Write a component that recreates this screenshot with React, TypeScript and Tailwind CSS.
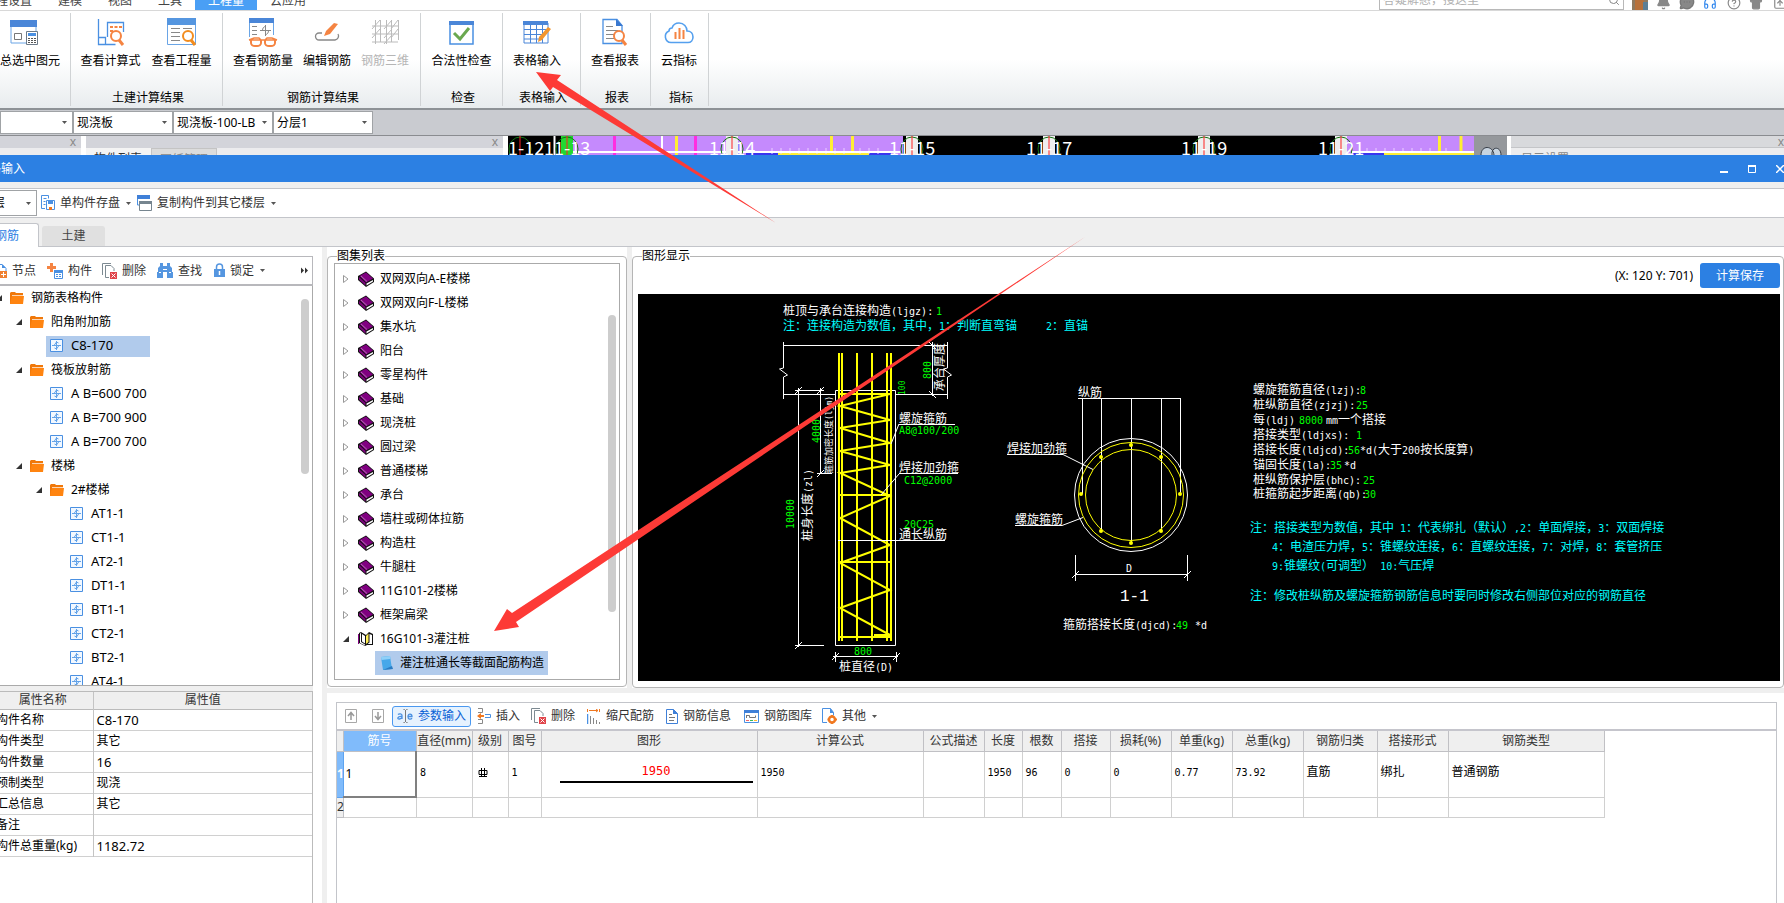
import { useState } from 'react'
import type { ReactNode } from 'react'
import { Bell, CircleHelp, Headphones, MessageCircleMore, Search, Shirt, SquareArrowUp } from 'lucide-react'

const BLUE = '#4a90e2'
const ORANGE = '#f58442'

function Caret() {
  return (
    <svg width="7" height="5" viewBox="0 0 7 5" className="shrink-0">
      <path d="M1 1h5L3.500 4z" fill="#555" />
    </svg>
  )
}

/* ---------- ribbon icons ---------- */

const ribbonIcons: Record<string, ReactNode> = {
  summary: (
    <svg width="41" height="28" viewBox="0 0 41 28" fill="none">
      <path d="M1 8v17h25V8" stroke="#6aa5e6" />
      <path d="M0 2h27v7H0z" fill="#4a86d8" />
      <path d="M4.500 15.500h7v6h-7z" stroke="#777" />
      <path d="M16.500 13.500h11v13h-11z" fill="#fff" stroke="#6c7a89" />
      <path d="M18 15h8v3h-8z" fill={BLUE} />
      <path d="M18 20h2v1h-2zM21 20h2v1h-2zM24 20h2v1h-2zM18 22h2v1h-2zM21 22h2v1h-2zM24 22h2v1h-2zM18 24h2v1h-2zM21 24h2v1h-2zM24 24h2v1h-2z" fill="#555" />
    </svg>
  ),
  formula: (
    <svg width="28" height="28" viewBox="0 0 28 28" fill="none">
      <path d="M1.500 1v25.500h17M1.500 19.500h7v7M10.500 19V4.500h16V14" stroke={BLUE} strokeWidth="1.300" />
      <path d="M13 8h3v2h-3zM17.500 8h3v2h-3zM22 8h3v2h-3zM13 12h3v2h-3z" fill={ORANGE} />
      <circle cx="19" cy="18" r="5" fill="#fff" stroke={ORANGE} strokeWidth="2" />
      <path d="M22 22l4 5" stroke={ORANGE} strokeWidth="3" />
    </svg>
  ),
  quantity: (
    <svg width="30" height="28" viewBox="0 0 30 28" fill="none">
      <path d="M0.500 6v20.500h28V6" stroke="#6aa5e6" />
      <path d="M0 0h29v7H0z" fill="#5596e0" />
      <path d="M4 10.500h9M4 14.500h9M4 18.500h9M4 22.500h9M16 10.500h9" stroke="#888" />
      <circle cx="21" cy="18" r="5" fill="#fff" stroke="#f28c1e" strokeWidth="2" />
      <path d="M24 22l4 5" stroke="#f28c1e" strokeWidth="3" />
    </svg>
  ),
  glasses: (
    <svg width="30" height="30" viewBox="0 0 30 30" fill="none">
      <path d="M1.500 5v14M25.500 5v12" stroke="#6aa5e6" />
      <path d="M1 0h25v5H1z" fill="#4a86d8" />
      <path d="M4 8.500h5M4 12.500h5M4 16.500h5" stroke="#888" />
      <path d="M17.500 7v11M12 12.500h11M14.500 12.500c0-2 1-4 3-4M20.500 12.500c0 2-1 4-3 4" stroke="#888" />
      <path d="M1 22l5-2h5l2 2M29 22l-5-2h-5l-2 2M1 22h28" stroke={ORANGE} strokeWidth="1.500" />
      <path d="M3 22v3a4 3 0 004 3h2a4 3 0 004-3v-3M17 22v3a4 3 0 004 3h2a4 3 0 004-3v-3" stroke={ORANGE} strokeWidth="2" />
    </svg>
  ),
  edit: (
    <svg width="26" height="28" viewBox="0 0 26 28" fill="none">
      <path d="M8 15H5a3.500 3.500 0 000 7h16a4 4 0 003-6" stroke="#888" strokeWidth="1.300" />
      <path d="M20 5l4 1-8 10-6 2 2-5z" fill={ORANGE} />
    </svg>
  ),
  grid3d: (
    <svg width="28" height="28" viewBox="0 0 28 28" fill="none" stroke="#bbb">
      <path d="M4.500 2v24M15.500 2v24M9.500 2v22M20.500 2v22M27.500 2v20M1 8h26M1 16h26M1 24h26M1 11l8-9M1 20l8-9M13 11l8-9M13 20l8-9M13 26l8-9M20 11l7-9M20 20l7-9" />
    </svg>
  ),
  check: (
    <svg width="26" height="28" viewBox="0 0 26 28" fill="none">
      <path d="M1 4h23v22H1z" stroke={BLUE} strokeWidth="1.500" />
      <path d="M0 3h25v4H0z" fill="#4a86d8" />
      <path d="M5 15l6 6 9-11" stroke="#6aa84f" strokeWidth="3" />
    </svg>
  ),
  table: (
    <svg width="28" height="28" viewBox="0 0 28 28" fill="none">
      <path d="M1 5h24v20H1zM1 11.500h24M1 16.500h20M1 21h18M7.500 6v19M13.500 6v19M19.500 6v19" stroke="#4a86d8" />
      <path d="M0 3h25v4H0z" fill="#4a86d8" />
      <path d="M25 9l3 2-9 11-4 2 1-5z" fill="#f2952e" />
    </svg>
  ),
  report: (
    <svg width="26" height="28" viewBox="0 0 26 28" fill="none">
      <path d="M1 1.500h14l5 6v18H1z" stroke={BLUE} strokeWidth="1.300" />
      <path d="M14 1l7 7h-7z" fill="#3a78cf" />
      <path d="M4 8.500h7M4 12.500h12M4 16.500h8M4 20.500h8" stroke="#888" />
      <circle cx="17" cy="18" r="5" fill="#fff" stroke={ORANGE} strokeWidth="2" />
      <path d="M20 22l4 5" stroke={ORANGE} strokeWidth="3" />
    </svg>
  ),
  cloud: (
    <svg width="32" height="28" viewBox="0 0 32 28" fill="none">
      <path d="M8 24.500a6 6 0 01-2-11.500c0-2 1-3 3-3 1-3 4-5 7-5 5 0 8 4 8 8 4 0 6 3 6 6 0 3-2 5.500-5 5.500z" stroke="#55a0ee" strokeWidth="1.600" />
      <path d="M12.500 14v7M16.500 10v11M20.500 12v9" stroke={ORANGE} strokeWidth="2" />
    </svg>
  ),
}

const ribbonGroups = [
  { title: '', cls: 'w-[71px]', gap: 'pl-0', tools: [{ icon: 'summary', label: '总选中图元', cls: 'w-[60px]' }] },
  {
    title: '土建计算结果', cls: 'w-[152px]', gap: 'pl-[9px] gap-[10px]',
    tools: [{ icon: 'formula', label: '查看计算式', cls: 'w-[61px]' }, { icon: 'quantity', label: '查看工程量', cls: 'w-[61px]' }],
  },
  {
    title: '钢筋计算结果', cls: 'w-[198px]', gap: 'pl-[10px] gap-[10px]',
    tools: [
      { icon: 'glasses', label: '查看钢筋量', cls: 'w-[60px]' },
      { icon: 'edit', label: '编辑钢筋', cls: 'w-[48px]' },
      { icon: 'grid3d', label: '钢筋三维', cls: 'w-[48px]', disabled: true },
    ],
  },
  { title: '检查', cls: 'w-[82px]', gap: 'pl-[10px]', tools: [{ icon: 'check', label: '合法性检查', cls: 'w-[61px]' }] },
  { title: '表格输入', cls: 'w-[78px]', gap: 'pl-[10px]', tools: [{ icon: 'table', label: '表格输入', cls: 'w-[48px]' }] },
  { title: '报表', cls: 'w-[70px]', gap: 'pl-[10px]', tools: [{ icon: 'report', label: '查看报表', cls: 'w-[48px]' }] },
  { title: '指标', cls: 'w-[58px]', gap: 'pl-[10px]', tools: [{ icon: 'cloud', label: '云指标', cls: 'w-[36px]' }] },
]

function MenuBar() {
  return (
    <header className="flex h-[11px] shrink-0 items-end overflow-hidden border-b border-[#d8d8d8] bg-white">
      <nav className="flex h-[18px] shrink-0 leading-[18px] text-[#444]">
        <a href="#set" className="-ml-[4px] w-[62px]">程设置</a>
        <a href="#model" className="w-[50px]">建模</a>
        <a href="#view" className="w-[50px]">视图</a>
        <a href="#tools" className="w-[37px]">工具</a>
        <a href="#qty" className="w-[62px] bg-[#4a9ff5] text-center text-white">工程量</a>
        <a href="#cloud" className="ml-[13px]">云应用</a>
      </nav>
      <div className="ml-auto flex shrink-0 items-end text-[#888]">
        <label className="mr-[8px] flex h-[20px] w-[245px] items-center border border-[#b8b8b8] px-[3px]">
          <input aria-label="搜索" placeholder="答疑解惑，搜这里" className="min-w-0 flex-1 leading-[18px] outline-none placeholder:text-[#b0b0b0]" />
          <Search size={12} />
        </label>
        <svg width="16" height="16" viewBox="0 0 16 16" className="mr-2">
          <path d="M0 0h16v16H0z" fill="#8f7a60" />
          <path d="M3 6l4-4 5 5v9H3z" fill="#b8713a" />
          <path d="M11 8h5v8h-5z" fill="#5c7f96" />
        </svg>
        <Bell size={15} fill="#888" className="mr-2" />
        <MessageCircleMore size={16} fill="#888" stroke="#777" className="mr-2" />
        <Headphones size={14} className="mr-[10px] text-[#2f86ee]" />
        <CircleHelp size={14} className="mr-2" />
        <Shirt size={14} fill="#888" className="mr-[10px]" />
        <SquareArrowUp size={14} className="-mr-[3px]" />
      </div>
    </header>
  )
}

function Ribbon() {
  return (
    <section className="flex h-[99px] shrink-0 border-b-2 border-[#8d9296] bg-linear-to-b from-white from-50% to-[#e8ecee]">
      {ribbonGroups.map((g, i) => (
        <div key={i} className={`${g.cls} my-[2px] flex shrink-0 flex-col border-r border-[#d0d3d5]`}>
          <div className={`flex ${g.gap}`}>
            {g.tools.map(t => (
              <button key={t.label} type="button" disabled={'disabled' in t}
                className={`${t.cls} flex flex-col items-center whitespace-nowrap pt-[5px] text-black disabled:text-[#b5b5b5]`}>
                <span className="flex h-[30px] items-start">{ribbonIcons[t.icon]}</span>
                <span className="mt-[4px] leading-[18px]">{t.label}</span>
              </button>
            ))}
          </div>
          <div className="mt-[19px] pl-[3px] text-center leading-[18px] text-black">{g.title}</div>
        </div>
      ))}
    </section>
  )
}

function Picker({ label, value, cls }: { label: string; value: string; cls: string }) {
  return (
    <div className={`relative flex items-center border border-[#a0a3a6] bg-white ${cls}`}>
      <select aria-label={label} className="h-full w-full appearance-none overflow-hidden pl-[3px] pr-3 text-black outline-none">
        <option>{value}</option>
      </select>
      <span className="pointer-events-none absolute right-[4px]"><Caret /></span>
    </div>
  )
}

/* ---------- strip of the model view behind the dialog ---------- */

const axes = [
  { x: 520, label: '1-12', tx: 508, fill: 'none' },
  { x: 567, label: '11-13', tx: 544, fill: '#22d832' },
  { x: 732, label: '11-14', tx: 709, fill: '#eee' },
  { x: 912, label: '11-15', tx: 889, fill: '#eee' },
  { x: 1049, label: '11-17', tx: 1026, fill: '#eee' },
  { x: 1204, label: '11-19', tx: 1181, fill: '#eee' },
  { x: 1341, label: '11-21', tx: 1318, fill: '#eee' },
]

function BackgroundStrip() {
  return (
    <section className="flex h-[19px] shrink-0 overflow-hidden bg-white text-[#888]">
      <div className="w-[81px] shrink-0 bg-[#ececee]">
        <div className="flex h-[12px] items-center justify-end bg-[#d3d4da] pr-[5px] leading-[12px]">x</div>
      </div>
      <div className="ml-[5px] w-[417px] shrink-0 bg-[#ececee]">
        <div className="flex h-[12px] items-center justify-end bg-[#d3d4da] pr-[5px] leading-[12px]">x</div>
        <div className="flex leading-[22px]">
          <span className="w-[65px] bg-[#f4f4f4] pl-2 text-[#333]">构件列表</span>
          <span className="w-[66px] border border-[#c4c4c4] bg-[#dcdcdc] pl-2">图纸管理</span>
        </div>
      </div>
      <div className="ml-[5px] flex-1 overflow-hidden bg-black">
        <svg width="966" height="19">
          <g transform="translate(-508,0)">
            <path d="M573 0h330v19H573zM1342 0h132v19h-132z" fill="#c58afd" />
            <path d="M727 8h12v11h-12z" fill="#8d8dff" />
            <path d="M746 15h32v4h-32zM869 15h22v4h-22zM1353 16h31v3h-31z" fill="#3a35f0" />
            <path d="M778 15h91v4h-91zM1384 16h90v3h-90z" fill="#ffee33" />
            <path d="M772 12v6M781 12v6M790 12v6M799 12v6M808 12v6M817 12v6M826 12v6M835 12v6M844 12v6M860 12v6M869 12v6M878 12v6M1367 12v5M1376 12v5M1385 12v5M1394 12v5M1403 12v5M1412 12v5M1421 12v5M1430 12v5M1446 12v5" stroke="#eccfff" />
            <path d="M614.500 0v19M695.500 0v19" stroke="#ff2ee0" strokeWidth="3" />
            <path d="M676.500 0v19M831.500 0v15M852.500 0v15M1439.500 0v19M1461 0v15" stroke="#ffee33" strokeWidth="3" />
            <path d="M554.500 0v19M662 0v15M570 16h330M1352 16h122" stroke="#fff" strokeWidth="2" />
            {axes.map(a => (
              <g key={a.x}>
                {a.fill !== 'none' && <path d={`M${a.x - 6} 0h12v19h-12z`} fill={a.fill} />}
                <ellipse cx={a.x} cy="13" rx="11" ry="12" fill="none" stroke="#157515" />
                <path d={`M${a.x} 0v19`} stroke="#f22" />
                <text x={a.tx} y="19" fontSize="18" fill="#fff" className="font-['Noto_Sans_CJK_SC','Noto_Sans',sans-serif]">{a.label}</text>
              </g>
            ))}
          </g>
        </svg>
      </div>
      <div className="w-[33px] shrink-0 bg-[#95989c]">
        <svg width="33" height="19" fill="none">
          <path d="M7 19c0-10 12-10 13 0M18 19c-1-9 9-9 9 0" fill="#c8d4e0" stroke="#333a44" />
        </svg>
      </div>
      <div className="ml-1 w-[273px] shrink-0 bg-[#ececee]">
        <div className="flex h-[12px] items-center justify-end border-b border-[#c4c5c8] bg-[#d8d9dc] leading-[12px]">x</div>
        <div className="pl-[10px] pt-[3px] leading-[16px]">显示设置</div>
      </div>
    </section>
  )
}

/* ---------- small icons ---------- */

function FolderIcon() {
  return (
    <svg width="14" height="13" viewBox="0 0 14 13" className="shrink-0">
      <path d="M0 1l1-1h4l1 1h7v3H3L1 12H0z" fill="#f0780a" />
      <path d="M2 4h12l-1 8H0z" fill="#ff8410" />
      <path d="M2 3.500h11" stroke="#fff" strokeWidth="0.700" />
    </svg>
  )
}

function RebarIcon() {
  return (
    <svg width="13" height="13" viewBox="0 0 13 13" fill="none" className="shrink-0">
      <path d="M0.500 0.500h12v12h-12z" fill="#f2f8ff" stroke={BLUE} />
      <path d="M6.500 2v9M2 6.500h9M4 6.500L6.500 3l2 1M9 6.500L6.500 10l-2-1" stroke="#64a3e8" />
    </svg>
  )
}

function ClosedBook() {
  return (
    <svg width="16" height="16" viewBox="0 0 16 16" className="shrink-0">
      <path d="M0 5l8-4.500 8 7v3.500l-8 5L0 9z" fill="#111" />
      <path d="M1.500 5l6.500-3.500 7 6-7 4z" fill="#800080" />
      <path d="M1 6l6.500 6v2.500L1 8.500z" fill="#800080" />
      <path d="M8.500 12.500L15 9v1.500l-6.500 4z" fill="#fff" />
      <path d="M3 5l6 5.500" stroke="#c9a0c9" strokeWidth="0.700" />
    </svg>
  )
}

function OpenBook() {
  return (
    <svg width="16" height="16" viewBox="0 0 16 16" className="shrink-0">
      <path d="M0 3h1v10H0z" fill="#800080" />
      <path d="M1 2l2-1 5 3 3-3 4 2v11H9l-2 1-6-3z" fill="#111" />
      <path d="M2 2.500l1-.5v9l4 2.500v1L2 12z" fill="#fff" />
      <path d="M4 3l3 2v7.500l-3-2z" fill="#fff" />
      <path d="M8 5l2.500-2.500v8.500L8 13z" fill="#ffee55" />
      <path d="M11.500 3l2.500 1v9H9.500l2-1.500z" fill="#fff" />
    </svg>
  )
}

function TreeArrow({ open }: { open: boolean }) {
  return open ? (
    <svg width="6" height="6" viewBox="0 0 6 6" className="shrink-0"><path d="M6 0v6H0z" fill="#333" /></svg>
  ) : (
    <svg width="6" height="8" viewBox="0 0 6 8" className="shrink-0"><path d="M0.500 0.500v7L5 4z" fill="#fff" stroke="#999" /></svg>
  )
}

function DeleteIcon() {
  return (
    <svg width="15" height="16" viewBox="0 0 15 16" fill="none">
      <path d="M0.500 12V0.500H9M3.500 14.500v-12H9l3 3V8M3.500 14.500H7" stroke="#7d8a92" />
      <path d="M8 9h7v7H8z" fill="#e0444a" />
      <path d="M9.500 10.500l4 4M13.500 10.500l-4 4" stroke="#fff" />
    </svg>
  )
}

const icons: Record<string, ReactNode> = {
  save: (
    <svg width="14" height="16" viewBox="0 0 14 16" fill="none">
      <path d="M4 13.500H0.500v-13h7v3M2.500 3.500h3M2.500 6.500h2M2.500 9.500h2" stroke={BLUE} />
      <path d="M5.500 5.500h8v9h-8z" stroke={BLUE} fill="#fff" />
      <path d="M7 6h5v3H7z" fill={BLUE} />
      <path d="M8 12h3v3H8z" fill="#f07820" />
    </svg>
  ),
  copy: (
    <svg width="15" height="16" viewBox="0 0 15 16" fill="none">
      <path d="M0.500 2v8H3M12.500 4V1" stroke={BLUE} />
      <path d="M0 0h13v4H0z" fill="#3f80d8" />
      <path d="M2.500 7h12v8.500h-12z" fill="#fff" stroke="#76858f" />
      <path d="M2 6h13v3H2z" fill="#76858f" />
    </svg>
  ),
  node: (
    <svg width="14" height="16" viewBox="0 0 14 16" fill="none">
      <path d="M0 1.500h9l4 4V8M0 14.500h6" stroke={BLUE} />
      <path d="M9 1l4 4H9z" fill={BLUE} />
      <path d="M7 8h7v7H7z" fill="#f08030" />
      <path d="M10.500 9v5M8 11.500h5" stroke="#fff" />
    </svg>
  ),
  member: (
    <svg width="16" height="16" viewBox="0 0 16 16" fill="none">
      <path d="M3 0h3v3h3v3H6v3H3V6H0V3h3z" fill={ORANGE} />
      <path d="M7.500 7.500h8v8h-8z" fill="#fff" stroke={BLUE} />
      <path d="M7 7h9v3H7z" fill={BLUE} />
      <path d="M9 11.500h2M12 11.500h2M9 13.500h2M12 13.500h2" stroke={BLUE} />
    </svg>
  ),
  del: <DeleteIcon />,
  find: (
    <svg width="16" height="15" viewBox="0 0 16 15" fill="#5596e0">
      <path d="M3 0h3v3h4V0h3v3l2 2v4h1v6h-6V9H6v6H0V9h1V5l2-2z" />
      <path d="M6 6h4v1H6zM2 9h2v1H2zM12 9h2v1h-2z" fill="#fff" />
    </svg>
  ),
  lock: (
    <svg width="11" height="15" viewBox="0 0 11 15" fill="none">
      <path d="M2.500 7V4a3 3 0 016 0v3" stroke="#5596e0" strokeWidth="1.500" />
      <path d="M0 6h11v8H0z" fill="#5596e0" />
      <path d="M5.500 8v4" stroke="#fff" strokeWidth="1.500" />
    </svg>
  ),
  up: (
    <svg width="12" height="14" viewBox="0 0 12 14" fill="none">
      <path d="M0.500 0.500h11v13H0.500z" stroke="#a8a8a8" /><path d="M6 11V4M3 7l3-3.500L9 7" stroke="#999" strokeWidth="1.500" />
    </svg>
  ),
  down: (
    <svg width="12" height="14" viewBox="0 0 12 14" fill="none">
      <path d="M0.500 0.500h11v13H0.500z" stroke="#a8a8a8" /><path d="M6 3v7M3 7l3 3.500L9 7" stroke="#999" strokeWidth="1.500" />
    </svg>
  ),
  insert: (
    <svg width="14" height="16" viewBox="0 0 14 16" fill="none">
      <path d="M1 0.500h4.500v4H1M1 15.500h4.500v-4H1" stroke="#888" />
      <path d="M8 6.500h5.500v3H8" stroke={BLUE} />
      <path d="M0 8l4-3v2h3v2H4v2z" fill="#f07820" />
    </svg>
  ),
  scale: (
    <svg width="14" height="15" viewBox="0 0 14 15" fill="none">
      <path d="M0.500 0v3M12.500 0v3M2 1.500h9M9 0l2 1.500L9 3" stroke="#f07820" />
      <path d="M0.500 5v10" stroke={BLUE} strokeWidth="1.500" />
      <path d="M3.500 7v8M6.500 9v6M9.500 11v4M12.500 13v2" stroke="#888" />
    </svg>
  ),
  info: (
    <svg width="12" height="15" viewBox="0 0 12 15" fill="none">
      <path d="M0.500 0.500h7l4 4v10h-11z" stroke="#3f80d8" /><path d="M7 0l5 5H7z" fill="#3f80d8" />
      <path d="M3 5.500h3M3 8.500h6M3 11.500h5" stroke="#777" />
    </svg>
  ),
  library: (
    <svg width="15" height="13" viewBox="0 0 15 13" fill="none">
      <path d="M0.500 0.500h14v12H0.500z" stroke={BLUE} /><path d="M0 0h15v3H0z" fill="#3f80d8" />
      <path d="M2.500 5v3M2.500 5.500h3v2h6v-2" stroke="#777" />
      <path d="M2 10.500h3" stroke="#e66" /><path d="M6 10.500h3" stroke="#3b5" /><path d="M10 10.500h3" stroke="#fb3" />
    </svg>
  ),
  other: (
    <svg width="15" height="16" viewBox="0 0 15 16" fill="none">
      <path d="M5 14.500H0.500v-14h8l3 4v3" stroke={BLUE} /><path d="M8 0l4 5H8z" fill={BLUE} />
      <circle cx="10" cy="11.500" r="3" stroke="#f07820" strokeWidth="2.500" />
      <path d="M10 7v2M10 14v2M5.500 11.500h2M13 11.500h2" stroke="#f07820" strokeWidth="2" />
    </svg>
  ),
  param: (
    <svg width="16" height="14" viewBox="0 0 16 14" fill="none">
      <path d="M8.500 1v12M6.500 0.500h1l1 1 1-1h1M6.500 13.500h1l1-1 1 1h1" stroke="#777" />
      <path d="M1 5.500c1-1 4-1 4 1V10M5 7.500c-5-.5-5 3-2.500 2.500S5 9 5 8M11.500 7.500H15c0-3-4-3.500-4 .2 0 3 3 2.800 4 1.500" stroke={BLUE} strokeWidth="1.300" />
    </svg>
  ),
}

function ToolButton({ icon, label, cls = '', caret }: { icon: string; label?: string; cls?: string; caret?: boolean }) {
  return (
    <button type="button" aria-label={label ?? icon} className={`flex shrink-0 items-center gap-[5px] whitespace-nowrap ${cls}`}>
      {icons[icon]}
      {label && <span>{label}</span>}
      {caret && <Caret />}
    </button>
  )
}

/* ---------- left pane ---------- */

type Node = { label: string; kind: 'folder' | 'leaf'; cls: string }

const memberTree: Node[] = [
  { label: '钢筋表格构件', kind: 'folder', cls: '-ml-[4px]' },
  { label: '阳角附加筋', kind: 'folder', cls: 'ml-4' },
  { label: 'C8-170', kind: 'leaf', cls: 'ml-[46px]' },
  { label: '筏板放射筋', kind: 'folder', cls: 'ml-4' },
  { label: 'A B=600 700', kind: 'leaf', cls: 'ml-[46px]' },
  { label: 'A B=700 900', kind: 'leaf', cls: 'ml-[46px]' },
  { label: 'A B=700 700', kind: 'leaf', cls: 'ml-[46px]' },
  { label: '楼梯', kind: 'folder', cls: 'ml-4' },
  { label: '2#楼梯', kind: 'folder', cls: 'ml-9' },
  ...['AT1-1', 'CT1-1', 'AT2-1', 'DT1-1', 'BT1-1', 'CT2-1', 'BT2-1', 'AT4-1'].map(
    (label): Node => ({ label, kind: 'leaf', cls: 'ml-[66px]' })
  ),
]

const properties = [
  ['构件名称', 'C8-170'],
  ['构件类型', '其它'],
  ['构件数量', '16'],
  ['预制类型', '现浇'],
  ['汇总信息', '其它'],
  ['备注', ''],
  ['构件总重量(kg)', '1182.72'],
]

function MemberPane() {
  const [selected, setSelected] = useState('C8-170')

  return (
    <aside className="flex w-[322px] shrink-0 flex-col overflow-hidden pr-[9px] pt-[9px]">
      <div className="flex h-[30px] shrink-0 items-center border-b-2 border-r border-t border-[#b8b8bc] pr-[3px] text-[#333]">
        <ToolButton icon="node" label="节点" cls="-ml-[7px] w-[54px]" />
        <ToolButton icon="member" label="构件" cls="w-[55px]" />
        <ToolButton icon="del" label="删除" cls="w-[55px]" />
        <ToolButton icon="find" label="查找" cls="w-[57px]" />
        <ToolButton icon="lock" label="锁定" caret />
        <button type="button" aria-label="更多" className="ml-auto">
          <svg width="8" height="7" viewBox="0 0 8 7"><path d="M0 0.500l3 3-3 3zM4 0.500l3 3-3 3z" fill="#333" /></svg>
        </button>
      </div>
      <div className="flex h-[400px] shrink-0 items-start overflow-hidden border-b border-r border-[#aaa]">
        <ul className="flex-1">
          {memberTree.map(n => (
            <li key={n.label} className={`flex h-[24px] items-center ${n.cls}`}>
              {n.kind === 'folder' ? (
                <button type="button" className="flex items-center">
                  <TreeArrow open />
                  <span className="ml-2 mr-[7px]"><FolderIcon /></span>
                  {n.label}
                </button>
              ) : (
                <button type="button" onClick={() => setSelected(n.label)}
                  className={`flex h-[21px] w-[104px] items-center gap-2 pb-[2px] pl-[4px] text-[13px] ${selected === n.label ? 'bg-[#b1cbec]' : ''}`}>
                  <RebarIcon />
                  {n.label}
                </button>
              )}
            </li>
          ))}
        </ul>
        <div className="mr-[3px] mt-[13px] h-[175px] w-2 rounded-full bg-[#cdcdcd]" />
      </div>
      <div className="h-[5px] shrink-0 bg-[#efefef]" />
      <div className="flex-1 overflow-hidden border-r border-t border-[#bbb]">
        <table className="w-full table-fixed border-collapse">
          <thead>
            <tr className="h-[17px] border-b border-[#bbb] bg-[#efefef] leading-[16px] text-[#333]">
              <th className="w-[93px] border-r border-[#c4c4c4] p-0 pr-[7px] font-normal">属性名称</th>
              <th className="p-0 font-normal">属性值</th>
            </tr>
          </thead>
          <tbody>
            {properties.map(([name, value]) => (
              <tr key={name} className="h-[21px] border-b border-[#d0d0d0] leading-[18px]">
                <td className="whitespace-nowrap border-r border-[#c4c4c4] p-0"><span className="-ml-1">{name}</span></td>
                <td className="p-0 pl-[3px] text-[13px]">{/[一-龥]/.test(value) ? <span className="text-[12px]">{value}</span> : value}</td>
              </tr>
            ))}
          </tbody>
        </table>
      </div>
    </aside>
  )
}

/* ---------- atlas list ---------- */

const atlas = [
  '双网双向A-E楼梯', '双网双向F-L楼梯', '集水坑', '阳台', '零星构件', '基础', '现浇桩', '圆过梁', '普通楼梯',
  '承台', '墙柱或砌体拉筋', '构造柱', '牛腿柱', '11G101-2楼梯', '框架扁梁',
]

function AtlasPane() {
  return (
    <div className="w-[300px] shrink-0 bg-white pt-[2px]">
      <fieldset className="rounded-[4px] border border-[#b5b5b5] px-[6px] pb-[6px]">
        <legend className="ml-[3px] leading-[14px]">图集列表</legend>
        <div className="flex h-[417px] items-start border border-[#aaa] pt-[3px]">
          <ul className="flex-1">
            {atlas.map(name => (
              <li key={name} className="h-[24px]">
                <button type="button" className="flex h-full items-center pl-2">
                  <TreeArrow open={false} />
                  <span className="ml-[9px] mr-[6px]"><ClosedBook /></span>
                  {name}
                </button>
              </li>
            ))}
            <li>
              <button type="button" className="flex h-[24px] items-center pl-2">
                <TreeArrow open />
                <span className="ml-[9px] mr-[6px]"><OpenBook /></span>
                16G101-3灌注桩
              </button>
              <button type="button" className="ml-[40px] flex h-[24px] w-[173px] items-center gap-[7px] whitespace-nowrap bg-[#b1cbec] pl-[5px]">
                <svg width="13" height="15" viewBox="0 0 13 15" className="shrink-0">
                  <path d="M1 1l9-1 2 13-9 1z" fill="#46a8ea" />
                  <path d="M1 1l9-1 .5 3-9 1z" fill="#8fd0f8" />
                  <path d="M3 14l10-1-1-3z" fill="#2a7cc4" />
                </svg>
                灌注桩通长等截面配筋构造
              </button>
            </li>
          </ul>
          <div className="mr-[3px] mt-[48px] h-[297px] w-2 rounded-full bg-[#cdcdcd]" />
        </div>
      </fieldset>
    </div>
  )
}

/* ---------- CAD drawing ---------- */

const WHITE = '#ffffff'
const GREEN = '#00ff00'
const CYAN = '#00ffff'
const YELLOW = '#ffff00'

// half-width characters are 6px wide, full-width ones 12px
function CadText({ x, y, fill = WHITE, rotate, small, children }: { x: number; y: number; fill?: string; rotate?: boolean; small?: boolean; children: string }) {
  const runs = children.match(/[\x20-\x7e]+|[^\x20-\x7e]+/g) ?? []
  return (
    <text x={x} y={y} fill={fill} transform={rotate ? `rotate(-90 ${x} ${y})` : undefined}
      className="whitespace-pre font-['DejaVu_Sans_Mono','Noto_Sans_CJK_SC',monospace]">
      {runs.map((r, i) => (
        <tspan key={i} fontSize={/[\x20-\x7e]/.test(r) ? (small ? 8 : 10) : small ? 9 : 12}>{r}</tspan>
      ))}
    </text>
  )
}

const notes: [number, number, string, string?][] = [
  [783, 315, '桩顶与承台连接构造(ljgz):'],
  [936, 315, '1', GREEN],
  [783, 330, '注：连接构造为数值，其中，1：判断直弯锚', CYAN],
  [1046, 330, '2：直锚', CYAN],
  [899, 423, '螺旋箍筋'],
  [899, 434, 'A8@100/200', GREEN],
  [899, 472, '焊接加劲箍'],
  [904, 484, 'C12@2000', GREEN],
  [904, 528, '20C25', GREEN],
  [899, 539, '通长纵筋'],
  [854, 655, '800', GREEN],
  [839, 671, '桩直径(D)'],
  [1078, 397, '纵筋'],
  [1007, 453, '焊接加劲箍'],
  [1015, 524, '螺旋箍筋'],
  [1126, 572, 'D'],
  [1063, 629, '箍筋搭接长度(djcd):'],
  [1176, 629, '49', GREEN],
  [1195, 629, '*d'],
  [1253, 394, '螺旋箍筋直径(lzj):'],
  [1360, 394, '8', GREEN],
  [1253, 409, '桩纵筋直径(zjzj):'],
  [1356, 409, '25', GREEN],
  [1253, 424, '每(ldj)'],
  [1299, 424, '8000', GREEN],
  [1326, 424, 'mm一个搭接'],
  [1253, 439, '搭接类型(ldjxs):'],
  [1356, 439, '1', GREEN],
  [1253, 454, '搭接长度(ldjcd):'],
  [1348, 454, '56', GREEN],
  [1360, 454, '*d(大于200按长度算)'],
  [1253, 469, '锚固长度(la):'],
  [1330, 469, '35', GREEN],
  [1344, 469, '*d'],
  [1253, 484, '桩纵筋保护层(bhc):'],
  [1363, 484, '25', GREEN],
  [1253, 498, '桩箍筋起步距离(qb):'],
  [1364, 498, '30', GREEN],
  [1250, 532, '注：搭接类型为数值，其中 1：代表绑扎（默认）,2：单面焊接，3：双面焊接', CYAN],
  [1272, 551, '4：电渣压力焊，5：锥螺纹连接，6：直螺纹连接，7：对焊，8：套管挤压', CYAN],
  [1272, 570, '9:锥螺纹(可调型） 10:气压焊', CYAN],
  [1250, 600, '注：修改桩纵筋及螺旋箍筋钢筋信息时要同时修改右侧部位对应的钢筋直径', CYAN],
]

const bars = [[1131, 445], [1101, 457], [1161, 457], [1081, 494], [1180, 494], [1101, 531], [1161, 531], [1131, 543]]

function CadDrawing() {
  return (
    <svg className="block h-full w-full" fill="none">
      <g transform="translate(-638,-294)">
        {/* pile cap */}
        <g stroke={WHITE}>
          <path d="M783.500 342v26l-4 1 8 6-4 2v22M947.500 342v26l-4 1 8 6-4 2v22" />
          <path d="M783 345.500h164M783 394.500h52M896 394.500h51" />
          <path d="M932.500 342v54M929 342l7 7M929 391l7 7" />
          <path d="M835.500 390.500h60v255h-60z" />
        </g>
        {/* reinforcement cage */}
        <g stroke={YELLOW} strokeWidth="2">
          <path d="M839 353v288M842 353v288M857 353v288M872 353v288M887 353v288M891 353v288" />
          <path d="M840 394h50M840 495h50M840 562h50M840 637h50" />
          <path d="M890 394L840 406L890 420L840 428L890 443L840 451L890 465L840 473L890 496L840 518L890 545L840 563L890 590L840 608L890 635H874" />
        </g>
        {/* dimensions and leaders */}
        <g stroke={WHITE}>
          <path d="M838 540.500h107M899 424.500h56M899 424l-8 20M899 473.500h59M899 474l-18 21" />
          <path d="M798.500 388v259M820.500 388v86M795 390.500h29M795 645.500h29M817 473.500h15" />
          <path d="M795 394l7-7M817 394l7-7M795 649l7-7M817 477l7-7" />
          <path d="M833 656.500h65M835.500 652v10M896.500 652v10M832 660l7-7M893 660l7-7" />
        </g>
        <CadText x={931} y={379} rotate fill={GREEN}>800</CadText>
        <CadText x={944} y={391} rotate>承台厚度</CadText>
        <CadText x={905} y={395} rotate small fill={GREEN}>100</CadText>
        <CadText x={820} y={443} rotate fill={GREEN}>4000</CadText>
        <CadText x={832} y={474} rotate small>箍筋加密长度(ljm)</CadText>
        <CadText x={812} y={541} rotate>桩身长度(zl)</CadText>
        <CadText x={794} y={529} rotate fill={GREEN}>10000</CadText>
        {/* section 1-1 */}
        <g stroke={WHITE}>
          <circle cx="1131" cy="495" r="56.500" />
          <path d="M1078 398.500h103M1082.500 398v96M1101.500 398v133M1131.500 398v145M1161.500 398v133M1180.500 398v96" />
          <path d="M1007 454.500h56l30 15M1015 525.500h47l21-8" />
          <path d="M1075.500 555v26M1187.500 555v26M1075 574.500h113M1072 578l7-7M1184 578l7-7" />
        </g>
        <circle cx="1131" cy="495" r="52.500" stroke={YELLOW} />
        <circle cx="1131" cy="495" r="45.500" stroke={YELLOW} />
        {bars.map(([x, y]) => <circle key={`${x}-${y}`} cx={x} cy={y} r="2" fill={YELLOW} />)}
        <text x="1120" y="601" fontSize="16" fill={WHITE} className="font-['Liberation_Mono',monospace]">1-1</text>
        {notes.map(([x, y, text, fill]) => <CadText key={`${x}-${y}`} x={x} y={y} fill={fill}>{text}</CadText>)}
      </g>
    </svg>
  )
}

function DrawingPane() {
  return (
    <div className="min-w-0 flex-1 bg-white pt-[2px]">
      <fieldset className="min-w-0 rounded-[4px] border border-[#b5b5b5] pb-[6px] pl-[5px] pr-[3px]">
        <legend className="ml-[4px] leading-[14px]">图形显示</legend>
        <div className="mb-[6px] flex h-[25px] items-center justify-end gap-[7px]">
          <span>(X: 120 Y: 701)</span>
          <button type="button" className="h-full w-[80px] rounded-[3px] bg-[#2c80e3] text-white">计算保存</button>
        </div>
        <div className="h-[387px] overflow-hidden bg-black">
          <CadDrawing />
        </div>
      </fieldset>
    </div>
  )
}

/* ---------- rebar table ---------- */

const columns = [
  { name: '筋号', cls: 'w-[73px]', value: '1' },
  { name: '直径(mm)', cls: 'w-[56px]', value: '8' },
  { name: '级别', cls: 'w-[36px]', value: 'grade' },
  { name: '图号', cls: 'w-[33px]', value: '1' },
  { name: '图形', cls: 'w-[216px]', value: 'shape' },
  { name: '计算公式', cls: 'w-[166px]', value: '1950' },
  { name: '公式描述', cls: 'w-[61px]', value: '' },
  { name: '长度', cls: 'w-[38px]', value: '1950' },
  { name: '根数', cls: 'w-[39px]', value: '96' },
  { name: '搭接', cls: 'w-[49px]', value: '0' },
  { name: '损耗(%)', cls: 'w-[61px]', value: '0' },
  { name: '单重(kg)', cls: 'w-[61px]', value: '0.77' },
  { name: '总重(kg)', cls: 'w-[71px]', value: '73.92' },
  { name: '钢筋归类', cls: 'w-[74px]', value: '直筋' },
  { name: '搭接形式', cls: 'w-[71px]', value: '绑扎' },
  { name: '钢筋类型', cls: 'w-[156px]', value: '普通钢筋' },
]

function cellContent(value: string) {
  if (value === 'shape') {
    return (
      <div className="ml-[15px] mr-1 border-b-2 border-black pb-[2px] text-center text-[12px] leading-[16px] text-[#f00]">1950</div>
    )
  }
  if (value === 'grade') {
    return (
      <svg width="10" height="11" viewBox="0 0 10 11" fill="none" stroke="#000" className="ml-[2px]" role="img" aria-label="HRB400">
        <path d="M1 3.500h8v4H1zM3.500 1v9M6.500 1v9M1 9.500h8" />
      </svg>
    )
  }
  return value
}

function RebarTable() {
  return (
    <table className="w-[1267px] table-fixed border-collapse">
      <thead>
        <tr className="h-[20px] bg-[#efefef] leading-[18px] text-[#333]">
          <th className="w-[6px] border-b border-r border-[#c0c0c4] p-0" />
          {columns.map((c, i) => (
            <th key={c.name} className={`${c.cls} whitespace-nowrap border-b border-r border-[#c0c0c4] p-0 font-normal ${i === 0 ? 'bg-[#80bbfb] text-white' : ''}`}>
              {c.name}
            </th>
          ))}
        </tr>
      </thead>
      <tbody>
        <tr className="h-[46px]">
          <th className="border-b border-r border-[#5ea3ef] bg-[#80bbfb] p-0 text-left font-bold text-white">1</th>
          {columns.map((c, i) => (
            <td key={c.name} className={i === 0
              ? 'border-b-2 border-r-2 border-[#808080] p-0 pl-[2px]'
              : "border-b border-r border-[#d0d0d0] p-0 pb-[3px] pl-[3px] font-['DejaVu_Sans_Mono','Noto_Sans_CJK_SC',monospace] text-[10px]"}>
              {/[一-龥]/.test(c.value) ? <span className="text-[12px]">{c.value}</span> : cellContent(c.value)}
            </td>
          ))}
        </tr>
        <tr className="h-[20px]">
          <th className="border-b border-r border-[#c0c0c4] bg-[#efefef] p-0 text-left font-normal text-[#333]">2</th>
          {columns.map(c => <td key={c.name} className="border-b border-r border-[#d0d0d0] p-0" />)}
        </tr>
      </tbody>
    </table>
  )
}

function RebarPane() {
  return (
    <section className="flex min-h-0 flex-1 flex-col bg-white pl-[9px] pr-[7px] pt-[9px]">
      <div className="flex min-h-0 flex-1 flex-col overflow-hidden border-x border-t border-[#c3c5ca]">
        <div className="flex h-[28px] shrink-0 items-center border-b-2 border-[#c5c5cc] pl-2 text-[#333]">
          <ToolButton icon="up" cls="w-[27px]" />
          <ToolButton icon="down" cls="w-[20px]" />
          <ToolButton icon="param" label="参数输入" cls="mr-[6px] h-[21px] w-[79px] rounded-[3px] border border-[#4a98f0] bg-[#e6f2fe] pl-[4px] text-[#0b62d6]" />
          <ToolButton icon="insert" label="插入" cls="w-[54px]" />
          <ToolButton icon="del" label="删除" cls="w-[56px]" />
          <ToolButton icon="scale" label="缩尺配筋" cls="w-[79px]" />
          <ToolButton icon="info" label="钢筋信息" cls="w-[78px]" />
          <ToolButton icon="library" label="钢筋图库" cls="w-[78px]" />
          <ToolButton icon="other" label="其他" caret />
        </div>
        <RebarTable />
      </div>
    </section>
  )
}

function Pointers() {
  return (
    <svg className="pointer-events-none absolute left-0 top-0" width="1100" height="640" fill="#fd3a36">
      <path d="M536 72L561 75L557 80L776 223L553 87L550 91z" />
      <path d="M494 631L507 609L512 613L1085 237L516 622L519 627z" />
    </svg>
  )
}

export default function App() {
  return (
    <div className="relative flex h-screen flex-col overflow-hidden bg-white font-['Noto_Sans','Noto_Sans_CJK_SC',sans-serif] text-[12px] leading-[18px] text-black">
      <MenuBar />
      <Ribbon />
      <div className="flex h-[26px] shrink-0 items-center border-b border-[#8a8c90] bg-[#c9cbd0]">
        <Picker label="楼层" value="" cls="h-[23px] w-[73px]" />
        <Picker label="构件类型" value="现浇板" cls="h-[23px] w-[100px]" />
        <Picker label="构件" value="现浇板-100-LB" cls="h-[23px] w-[100px]" />
        <Picker label="分层" value="分层1" cls="h-[23px] w-[100px]" />
      </div>
      <BackgroundStrip />

      <div className="flex h-[27px] shrink-0 items-center bg-[#2c80e3] text-white">
        <h1 className="-ml-[11px]">格输入</h1>
        <div className="ml-auto flex items-center gap-[20px]">
          <button type="button" aria-label="最小化"><svg width="8" height="8"><path d="M0 6h8v2H0z" fill="#fff" /></svg></button>
          <button type="button" aria-label="最大化"><svg width="8" height="8" fill="none"><path d="M0.500 1h7v6.500h-7z" stroke="#fff" /><path d="M0 0h8v2H0z" fill="#fff" /></svg></button>
          <button type="button" aria-label="关闭"><svg width="8" height="8"><path d="M0 0l8 8M8 0L0 8" stroke="#fff" strokeWidth="1.500" /></svg></button>
        </div>
      </div>
      <div className="h-[6px] shrink-0 bg-[#efefef]" />
      <div className="flex h-[30px] shrink-0 items-center border-y border-[#c3c5ca] text-[#333]">
        <div className="-ml-[11px] mr-[4px]"><Picker label="楼层选择" value="层" cls="h-[26px] w-[48px]" /></div>
        <ToolButton icon="save" label="单构件存盘" cls="mr-[5px]" caret />
        <ToolButton icon="copy" label="复制构件到其它楼层" caret />
      </div>
      <nav className="flex h-[29px] shrink-0 items-end border-b border-[#c3c5ca] bg-[#efefef]">
        <button type="button" className="-mb-px mr-[3px] h-[24px] w-[39px] rounded-tr-[3px] border-r border-t border-[#c3c5ca] bg-white text-left text-[#2c80e3]">
          <span className="-ml-[5px]">钢筋</span>
        </button>
        <button type="button" className="h-[20px] w-[63px] rounded-t-[3px] bg-[#e0e0e0] text-[#444]">土建</button>
      </nav>

      <main className="flex min-h-0 flex-1">
        <MemberPane />
        <div className="w-[5px] shrink-0 bg-[#efefef]" />
        <div className="flex min-w-0 flex-1 flex-col">
          <div className="flex shrink-0 gap-[5px] bg-[#efefef] pb-[5px]">
            <AtlasPane />
            <DrawingPane />
          </div>
          <RebarPane />
        </div>
      </main>
      <Pointers />
    </div>
  )
}
